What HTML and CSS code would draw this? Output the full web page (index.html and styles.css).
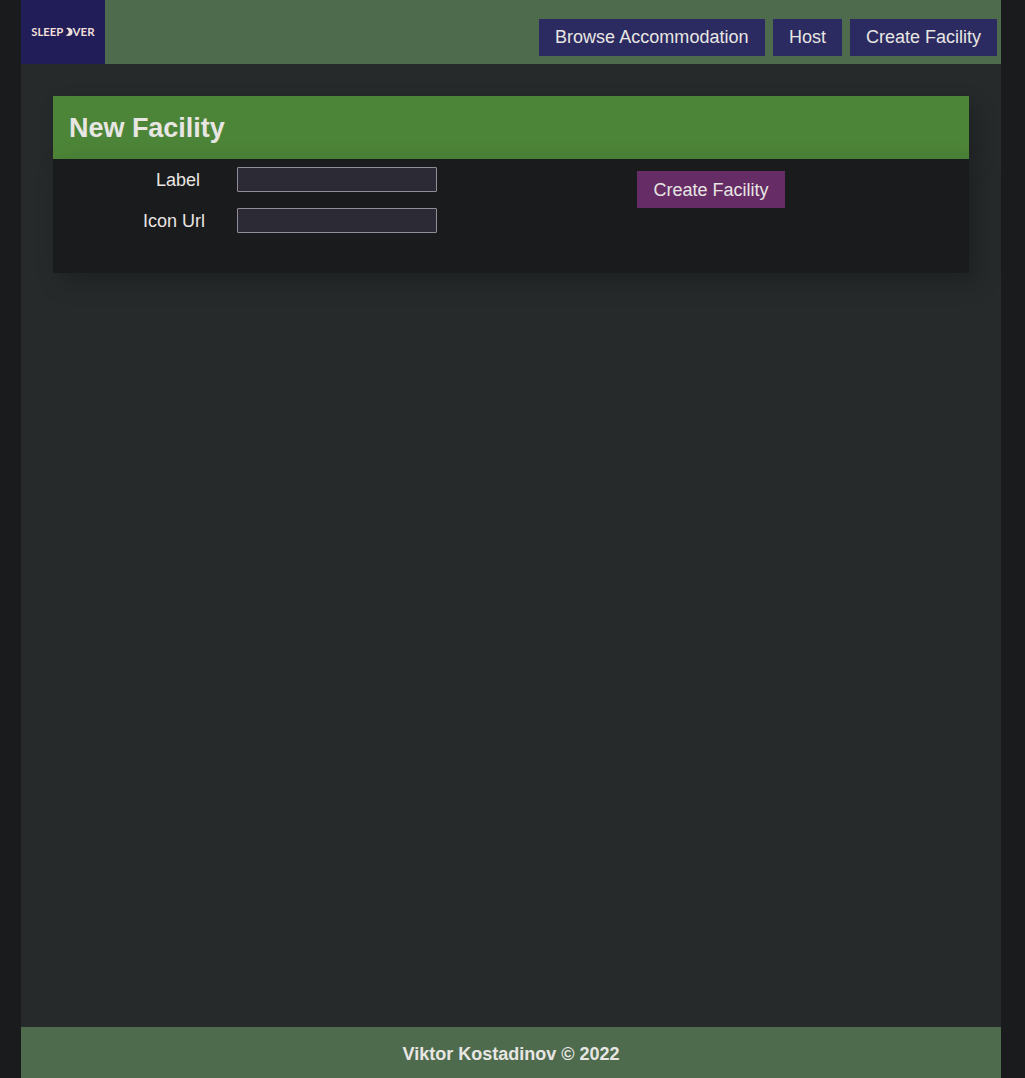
FILE: index.html
```html
<!DOCTYPE html>
<html lang="en">
<head>
<meta charset="utf-8">
<title>Sleepover</title>
<link rel="stylesheet" href="styles.css">
</head>
<body>
<div class="page">
  <header class="site-header">
    <a class="logo">
      <svg width="84" height="64" viewBox="0 0 84 64" aria-label="Sleepover">
        <text x="10.3" y="36" textLength="32" lengthAdjust="spacingAndGlyphs">SLEEP</text>
        <path d="M45 28.2C48.8 30 48.8 34 44.5 35.3C48.2 37 51.6 35.2 51.6 31.9C51.6 28.6 48.2 26.8 45 28.2Z"/>
        <text x="51.6" y="36" textLength="22" lengthAdjust="spacingAndGlyphs">VER</text>
      </svg>
    </a>
    <nav class="nav">
      <a class="button button-wide">Browse Accommodation</a>
      <a class="button">Host</a>
      <a class="button">Create Facility</a>
    </nav>
  </header>
  <main class="content">
    <h1 class="panel-title">New Facility</h1>
    <form class="panel">
      <div class="fields">
        <label class="field"><span class="caption caption-short">Label</span><input class="input" type="text"></label>
        <label class="field"><span class="caption">Icon Url</span><input class="input" type="text"></label>
      </div>
      <button class="button submit" type="button">Create Facility</button>
    </form>
  </main>
  <footer class="site-footer">Viktor Kostadinov © 2022</footer>
</div>
</body>
</html>
```
FILE: styles.css
```css
* { box-sizing: border-box; }
body {
  margin: 0;
  background: #1a1b1c;
  color: #e8e6e3;
  font: 18px/21px "Liberation Sans", Arial, sans-serif;
}
.page {
  display: flex;
  flex-direction: column;
  width: 980px;
  height: 1078px;
  margin-left: 21px;
  background: #262a2b;
}
.site-header {
  display: flex;
  justify-content: space-between;
  align-items: flex-end;
  height: 64px;
  background: #4e6b4e;
}
.logo { width: 84px; height: 64px; background: #201d59; }
.logo svg { display: block; fill: #f0dfd8; }
.logo text { font: 700 11.5px Lato, sans-serif; }
.nav { display: flex; gap: 8px; padding: 0 4px 8px; }
.button {
  padding: 8px 16px;
  height: 37px;
  border: 0;
  background: #2c2b61;
  color: #e8e6e3;
  font: inherit;
  white-space: nowrap;
}
.button-wide { width: 226px; letter-spacing: 0.03px; }
.content { flex: 1; padding: 32px; }
.panel-title {
  margin: 0;
  padding: 17px 16px 15px;
  background: #4d8538;
  font-size: 27px;
  line-height: 31px;
  letter-spacing: -0.03px;
  box-shadow: 8px 8px 20px rgba(0, 0, 0, .2);
}
.panel {
  position: relative;
  display: flex;
  align-items: flex-start;
  height: 114px;
  padding-top: 8px;
  background: #1a1b1c;
  box-shadow: 8px 8px 24px rgba(0, 0, 0, .23);
}
.fields { display: grid; gap: 16px; width: 584px; }
.field { display: flex; align-items: center; height: 25px; }
.caption { width: 184px; padding: 2px 32px 0 0; text-align: right; }
.caption-short { padding-right: 37px; }
.input {
  width: 200px;
  height: 25px;
  border: 1px solid #918d99;
  border-radius: 1px;
  background: #2c2a34;
  color: inherit;
}
.submit { width: 148px; margin-top: 4px; padding: 9px 16px 7px; background: #662c66; }
.site-footer {
  height: 51px;
  padding-top: 17px;
  background: #4e6b4e;
  font-weight: 700;
  text-align: center;
}
```
